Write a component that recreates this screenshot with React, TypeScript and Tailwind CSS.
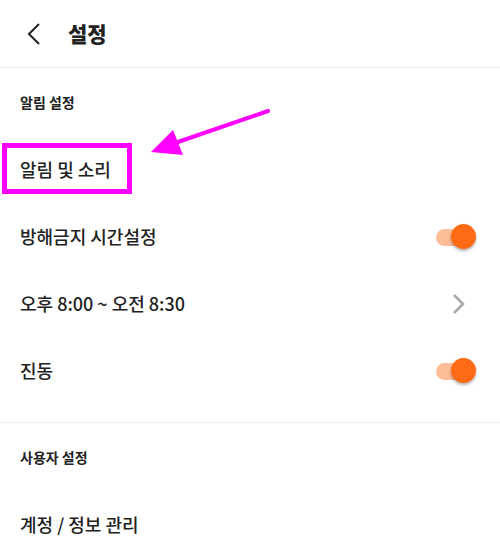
import React from "react";

function Toggle() {
  return (
    <div className="relative h-[26px] w-[40px] shrink-0">
      <div className="absolute left-0 top-[5px] h-[17px] w-[32px] rounded-full bg-[#fcbd97]" />
      <div className="absolute right-0 top-0 h-[25px] w-[25px] rounded-full bg-[#ff6b14] shadow-[0_2px_3px_rgba(0,0,0,0.3)]" />
    </div>
  );
}

function Row({ label, right }: { label: string; right?: React.ReactNode }) {
  return (
    <div className="flex h-[67px] items-center justify-between pl-5 pr-6">
      <span className="text-[18px] font-medium text-[#222]">{label}</span>
      {right}
    </div>
  );
}

export default function App() {
  return (
    <div className="relative h-[554px] w-[500px] overflow-hidden bg-white font-['Noto_Sans_CJK_KR',sans-serif]">
      {/* Header */}
      <div className="flex h-[68px] items-center border-b border-[#eeeeee] pl-[26px]">
        <svg width="16" height="24" viewBox="0 0 16 24" fill="none" stroke="#222" strokeWidth="2">
          <path d="M13 2 L3 12 L13 22" />
        </svg>
        <span className="ml-[26px] text-[21px] font-black text-[#222]">설정</span>
      </div>

      {/* 알림 설정 */}
      <div className="flex h-[68px] items-center pl-5">
        <span className="text-[14px] font-bold text-[#222]">알림 설정</span>
      </div>
      <div className="relative">
        <Row label="알림 및 소리" />
        <div className="absolute left-[2px] top-[7px] h-[51px] w-[130px] border-[5px] border-[#ff00ff]" />
      </div>
      <Row label="방해금지 시간설정" right={<Toggle />} />
      <Row
        label="오후 8:00 ~ 오전 8:30"
        right={
          <svg width="14" height="22" viewBox="0 0 14 22" fill="none" stroke="#a8a8a8" strokeWidth="2.6" className="mr-[10px]">
            <path d="M2 2 L11 11 L2 20" />
          </svg>
        }
      />
      <Row label="진동" right={<Toggle />} />

      <div className="mt-[18px] border-t border-[#eeeeee]" />

      {/* 사용자 설정 */}
      <div className="flex h-[68px] items-center pl-5">
        <span className="text-[14px] font-bold text-[#222]">사용자 설정</span>
      </div>
      <Row label="계정 / 정보 관리" />

      {/* annotation arrow */}
      <svg className="absolute left-0 top-0" width="500" height="554" viewBox="0 0 500 554">
        <line x1="268" y1="111" x2="175" y2="143" stroke="#ff00ff" strokeWidth="4" strokeLinecap="round" />
        <polygon points="151,152 173,130 183,155" fill="#ff00ff" />
      </svg>
    </div>
  );
}
